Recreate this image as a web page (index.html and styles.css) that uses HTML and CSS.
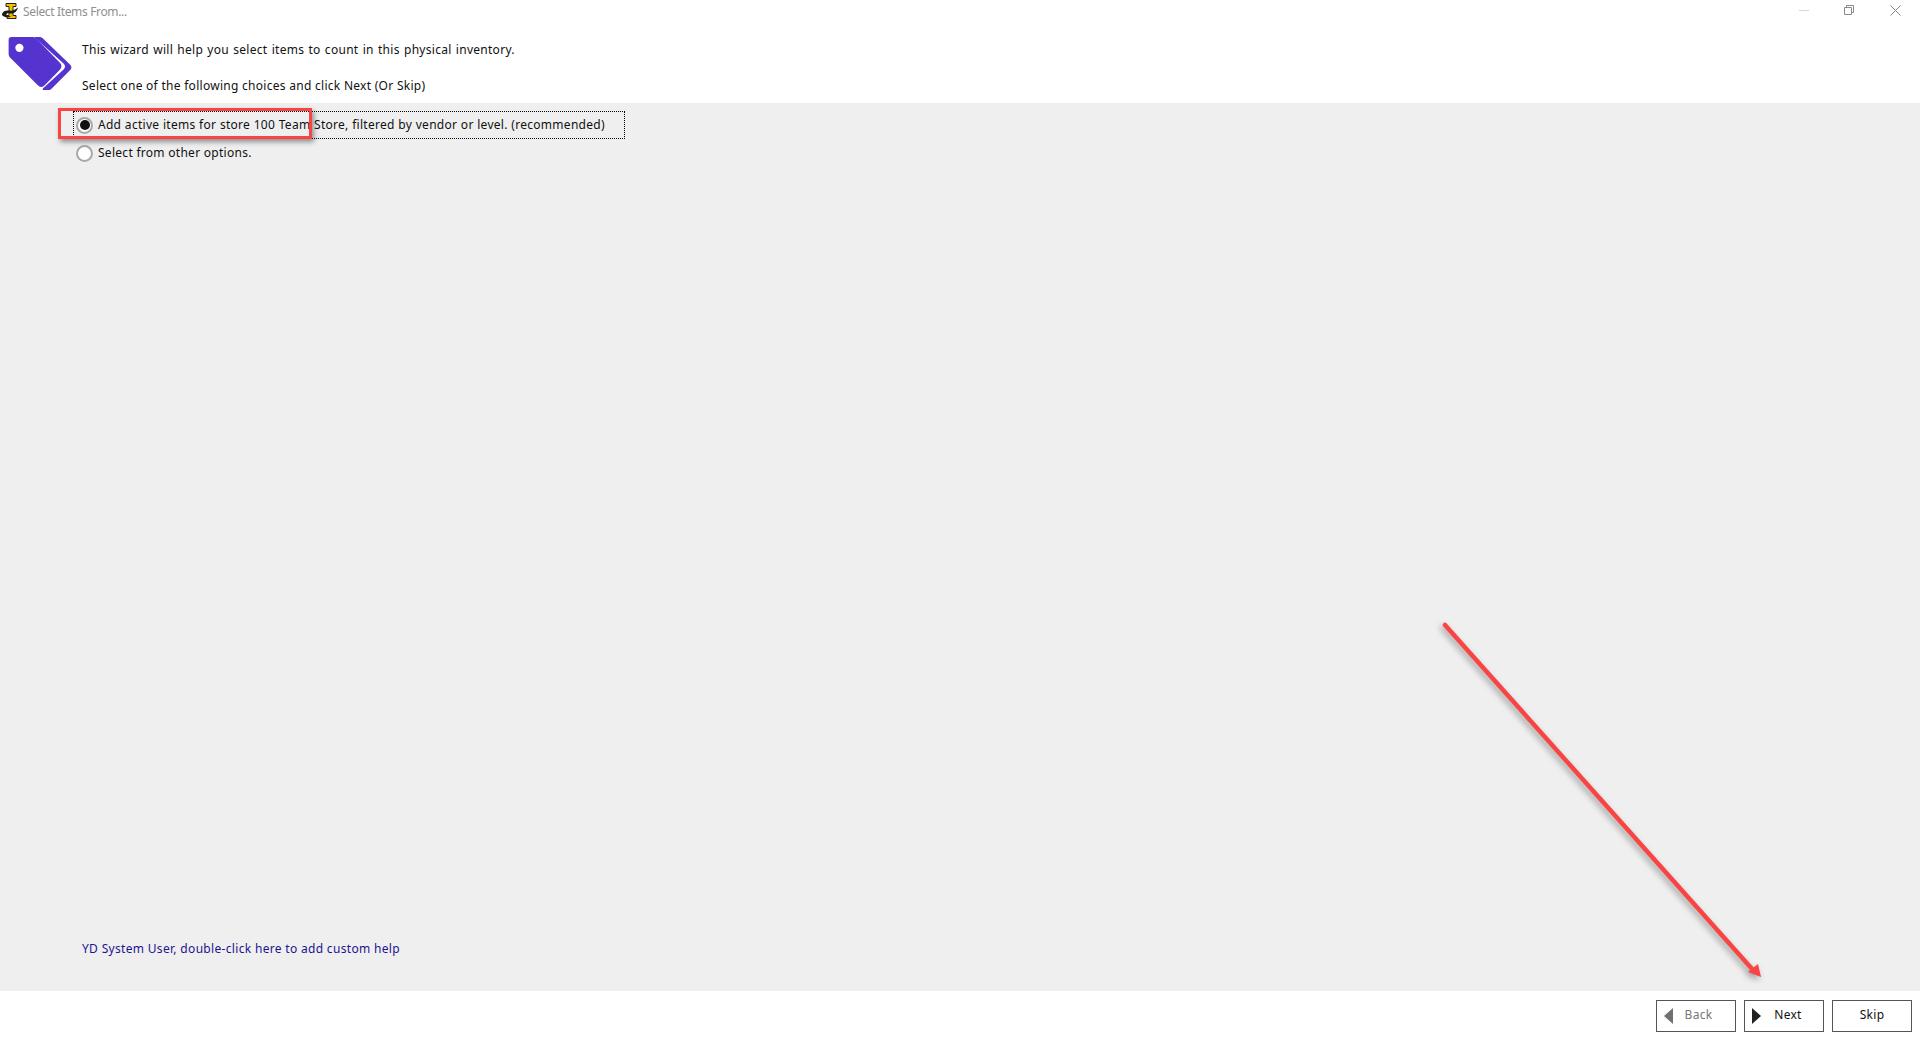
FILE: index.html
```html
<!DOCTYPE html>
<html lang="en">
<head>
    <meta charset="UTF-8">
    <title>Select Items From...</title>
    <link rel="stylesheet" href="styles.css">
</head>
<body>
    <div class="window">
        <div class="titlebar">
            <svg class="app-logo" width="18" height="18" viewBox="0 0 18 18">
                <path d="M5 0.500h10v3h-3v9h3v3H6v-3h2v-9H5z" fill="#f5c400" stroke="#222" stroke-width="1"/>
                <path d="M1 11c1-3 4-4 7-3.500 4 .5 6-.5 9-3-1 4-4 6.500-8 6-2.500-.4-3.500 0-3.500 1 0 1.500 2.500 2 5.500 1-2 1.800-4.500 2.200-7 1.400C1.800 13.200 .7 12.200 1 11z" fill="#1c1c10"/>
            </svg>
            <span class="title">Select Items From...</span>
            <div class="win-controls">
                <svg class="win-min" width="10" height="1" viewBox="0 0 10 1"><path d="M0 .5h10" stroke="#d8d8d8"/></svg>
                <svg class="win-max" width="10" height="10" viewBox="0 0 10 10"><path d="M.5 2.500h7v7h-7zM2.500 2.500v-2h7v7h-2" fill="none" stroke="#8a8a8a"/></svg>
                <svg class="win-close" width="11" height="11" viewBox="0 0 11 11"><path d="M.5 .5l10 10M10.500 .5l-10 10" stroke="#8a8a8a"/></svg>
            </div>
        </div>

        <div class="header">
            <svg class="tag-icon" width="66" height="53" viewBox="0 0 66 54">
                <path d="M3 0h21c2 0 3 .6 4.500 2L52 26c2.500 2.500 2.500 5 0 7.500L37 49c-2.500 2.500-5 2.500-7.500 0L3.500 23C1.500 21 0 19.500 0 17V3c0-2 1-3 3-3z" fill="#5433cf"/>
                <circle cx="11" cy="11" r="4.200" fill="#fff"/>
                <path d="M27 0h4c2 0 3 .6 4.500 2l27 26c2 2 2 4 0 6L44 52.500c-1.200 1.200-2 1.500-3.500 1.500H36c-1.500 0-1.800-.8-.8-1.800L56 33c2-2 2-4 0-6L27 1c-.5-.5-.5-1 0-1z" fill="#5433cf"/>
            </svg>
            <div class="intro">
                <p class="intro-wide">This wizard will help you select items to count in this physical inventory.</p>
                <p>Select one of the following choices and click Next (Or Skip)</p>
            </div>
        </div>

        <div class="content">
            <div class="options">
                <label class="option option-focus">
                    <span class="radio radio-on"></span>
                    <span class="option-text option-wide">Add active items for store 100 Team Store, filtered by vendor or level. (recommended)</span>
                </label>
                <label class="option">
                    <span class="radio"></span>
                    <span class="option-text">Select from other options.</span>
                </label>
                <div class="callout-box"></div>
            </div>
            <div class="help-link">YD System User, double-click here to add custom help</div>
        </div>

        <div class="footer">
            <button class="btn btn-disabled"><span class="arrow-left"></span>Back</button>
            <button class="btn"><span class="arrow-right"></span>Next</button>
            <button class="btn btn-plain">Skip</button>
        </div>

        <!-- red annotation arrow -->
        <svg class="callout-arrow" width="1920" height="1040" viewBox="0 0 1920 1040">
            <path d="M1445 625L1753 970" stroke="#f94444" stroke-width="4.500" stroke-linecap="round" fill="none"/>
            <path d="M1761 977L1748 972L1758 964z" fill="#f94444"/>
        </svg>
    </div>
</body>
</html>
```

FILE: styles.css
```css
* {
    box-sizing: border-box;
}
html, body {
    margin: 0;
    height: 100%;
}
body {
    font-family: "Noto Sans", "Open Sans", sans-serif;
    font-size: 12px;
    letter-spacing: 0.28px;
    color: #111;
    background-color: white;
}
p {
    margin: 0;
}
.window {
    position: relative;
    height: 1040px;
    display: flex;
    flex-direction: column;
    overflow: hidden;
}
.titlebar {
    height: 24px;
    display: flex;
    align-items: center;
    padding-left: 1px;
    flex-shrink: 0;
}
.app-logo {
    flex-shrink: 0;
}
.title {
    margin-left: 4px;
    margin-top: -2px;
    color: #8f8f8f;
    letter-spacing: -0.35px;
}
.win-controls {
    margin-left: auto;
    display: flex;
    align-items: flex-start;
    height: 24px;
    padding-right: 19px;
    padding-top: 5px;
}
.win-min {
    margin-top: 5px;
}
.win-max {
    margin-left: 35px;
}
.win-close {
    margin-left: 36px;
}
.header {
    height: 79px;
    display: flex;
    flex-shrink: 0;
    padding-left: 8px;
}
.tag-icon {
    margin-top: 13px;
    flex-shrink: 0;
}
.intro {
    margin-left: 8px;
    padding-top: 17px;
    display: flex;
    flex-direction: column;
    gap: 19px;
    line-height: 17px;
}
.intro-wide {
    word-spacing: 0.85px;
}
.content {
    flex: 1;
    background-color: #efefef;
    display: flex;
    flex-direction: column;
    padding: 8px 0 34px 73px;
}
.options {
    position: relative;
    display: flex;
    flex-direction: column;
    gap: 0;
}
.option {
    width: 552px;
    height: 28px;
    display: flex;
    align-items: center;
    padding-left: 3px;
    gap: 5px;
}
.option-focus {
    border: 1px dotted #000;
    padding-left: 2px;
}
.option-text {
    margin-top: -2px;
}
.option-wide {
    word-spacing: 0.2px;
}
.radio {
    width: 17px;
    height: 17px;
    border-radius: 50%;
    border: 2px solid #a8a8a8;
    background-color: white;
    flex-shrink: 0;
    display: flex;
    align-items: center;
    justify-content: center;
}
.radio-on::after {
    content: "";
    width: 10px;
    height: 10px;
    border-radius: 50%;
    background-color: #111;
}
.callout-box {
    position: absolute;
    left: -15px;
    top: -3px;
    width: 254px;
    height: 31px;
    border: 3px solid #f94444;
    box-shadow: 2px 3px 5px rgba(0,0,0,0.4);
}
.help-link {
    margin-top: auto;
    margin-left: 9px;
    color: #1c1490;
    line-height: 17px;
    letter-spacing: 0.32px;
}
.footer {
    height: 49px;
    flex-shrink: 0;
    display: flex;
    justify-content: flex-end;
    gap: 8px;
    padding: 9px 8px 8px 0;
}
.btn {
    width: 80px;
    height: 32px;
    display: flex;
    align-items: center;
    justify-content: center;
    position: relative;
    padding: 0 0 3px 8px;
    background-color: white;
    border: 1px solid #555;
    font-family: inherit;
    font-size: 12px;
    letter-spacing: inherit;
    color: #111;
}
.btn-plain {
    padding-left: 0;
}
.btn-disabled {
    padding-left: 5px;
    color: #777;
}
.arrow-left,
.arrow-right {
    position: absolute;
    top: 7px;
    width: 0;
    height: 0;
    border-top: 8px solid transparent;
    border-bottom: 8px solid transparent;
}
.arrow-left {
    left: 7px;
    border-right: 9px solid #707070;
}
.arrow-right {
    left: 7px;
    border-left: 9px solid #222;
}
.callout-arrow {
    position: absolute;
    left: 0;
    top: 0;
    pointer-events: none;
    filter: drop-shadow(-2px 3px 3px rgba(0,0,0,0.35));
}
```
